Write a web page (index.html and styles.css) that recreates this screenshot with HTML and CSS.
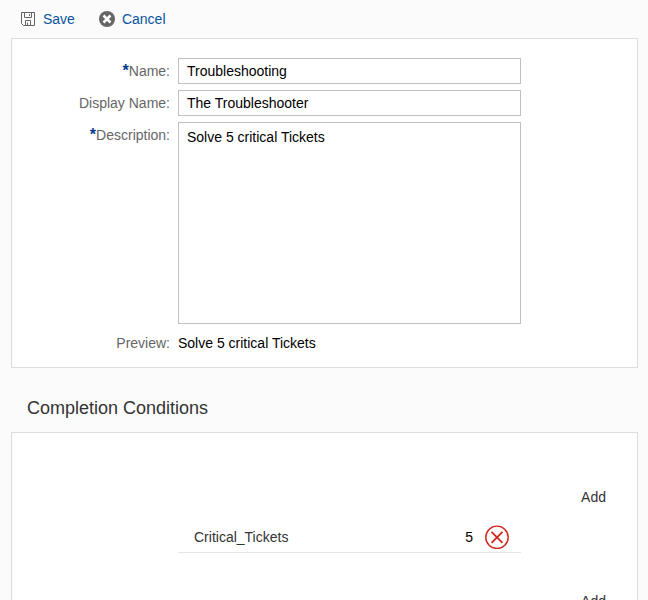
FILE: index.html
```html
<!DOCTYPE html>
<html lang="en">
<head>
<meta charset="utf-8">
<title>Completion Conditions</title>
<link rel="stylesheet" href="styles.css">
</head>
<body>
<header class="toolbar">
  <button type="button" class="action">
    <svg class="icon" viewBox="0 0 16 16" fill="none" stroke="#666" stroke-width="1" aria-hidden="true">
      <path d="M1.500 1.500h13v13H3.500l-2-2z"/>
      <path d="M4.500 1.500v5h7v-5M9.500 3v2M5.500 14.500v-5h5v5M7.500 11.500v3"/>
    </svg>
    <span>Save</span>
  </button>
  <button type="button" class="action">
    <svg class="icon" viewBox="0 0 16 16" aria-hidden="true">
      <circle cx="8" cy="8" r="8" fill="#666"/>
      <path d="M4.500 4.500l7 7M11.500 4.500l-7 7" stroke="#fff" stroke-width="2.500"/>
    </svg>
    <span>Cancel</span>
  </button>
</header>
<main>
  <form class="panel form">
    <label class="label" for="name"><b class="required">*</b>Name:</label>
    <input class="field" id="name" type="text" value="Troubleshooting">
    <label class="label" for="display">Display Name:</label>
    <input class="field" id="display" type="text" value="The Troubleshooter">
    <label class="label" for="description"><b class="required">*</b>Description:</label>
    <textarea class="field area" id="description">Solve 5 critical Tickets</textarea>
    <label class="label" for="preview">Preview:</label>
    <output class="preview" id="preview">Solve 5 critical Tickets</output>
  </form>
  <h2 class="heading">Completion Conditions</h2>
  <section class="panel conditions">
    <button type="button" class="add">Add</button>
    <div class="condition">
      <span class="condition-name">Critical_Tickets</span>
      <span class="count">5</span>
      <button type="button" class="remove" aria-label="Remove">
        <svg class="remove-icon" viewBox="0 0 24 24" fill="none" stroke="#d0251c" aria-hidden="true">
          <circle cx="12" cy="12.300" r="11.200" stroke-width="1.400"/>
          <path d="M6.500 6.800l11 11M17.500 6.800l-11 11" stroke-width="1.800"/>
        </svg>
      </button>
    </div>
    <button type="button" class="add">Add</button>
  </section>
</main>
</body>
</html>
```
FILE: styles.css
```css
* {
  box-sizing: border-box;
}

body {
  margin: 0;
  height: 100vh;
  overflow: hidden;
  background: #fbfbfb;
  color: #000;
  font: 14px/20px "Liberation Sans", Arial, sans-serif;
}

button {
  padding: 0;
  border: 0;
  background: none;
  color: #333;
  font: inherit;
  cursor: pointer;
}

.toolbar {
  display: flex;
  gap: 24px;
  height: 38px;
  padding: 0 20px;
}

.action {
  display: flex;
  align-items: center;
  gap: 7px;
  color: #0854a0;
}

.icon {
  width: 16px;
  height: 16px;
}

.panel {
  margin: 0 10px 0 11px;
  border: 1px solid #ddd;
  background: #fff;
}

.form {
  display: grid;
  grid-template-columns: 158px minmax(0, 1fr);
  gap: 6px 8px;
  padding: 19px 116px 11px 0;
}

.label {
  padding-top: 3px;
  color: #666;
  text-align: right;
}

.required {
  color: #003b8e;
  font-size: 16px;
  line-height: 1;
}

.field {
  width: 100%;
  height: 26px;
  margin: 0;
  padding: 0 8px;
  border: 1px solid #bfbfbf;
  border-radius: 0;
  background: #fff;
  color: #000;
  font: inherit;
}

.area {
  display: block;
  height: 202px;
  padding: 4px 8px;
  resize: none;
}

.preview {
  height: 26px;
  padding-top: 3px;
}

.heading {
  margin: 0;
  padding: 30px 27px 14px;
  color: #333;
  font-size: 18px;
  font-weight: 400;
  line-height: 20px;
}

.conditions {
  padding: 54px 0;
}

.add {
  display: block;
  margin: 0 31px 0 auto;
}

.condition {
  display: flex;
  align-items: center;
  height: 32px;
  margin: 14px 116px 38px 166px;
  padding: 0 12px 0 16px;
  border-bottom: 1px solid #e5e5e5;
}

.condition-name {
  flex: 1;
  color: #333;
}

.remove {
  width: 24px;
  height: 24px;
  margin-left: 12px;
}

.remove-icon {
  display: block;
  width: 24px;
  height: 24px;
}
```
